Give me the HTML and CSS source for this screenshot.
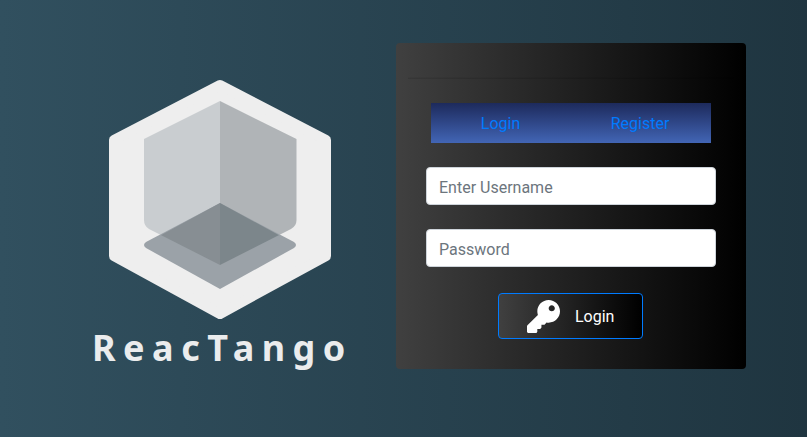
FILE: index.html
```html
<!DOCTYPE html>
<html lang="en">
<head>
<meta charset="utf-8">
<title>ReacTango</title>
<link rel="stylesheet" href="styles.css">
</head>
<body>
<main class="page">
  <section class="brand">
    <svg class="logo" width="224" height="240" viewBox="108 79 224 240" aria-hidden="true">
      <defs>
        <clipPath id="floor"><path d="M220 203 L297 245 L220 289 L143 245 Z"/></clipPath>
      </defs>
      <path class="hex" d="M220 85 L326 140 V256 L220 314 L114 256 V140 Z"/>
      <path class="wall-l" d="M220 101 V265 L149 229 Q144 226 144 220 V139 Z"/>
      <path class="wall-r" d="M220 101 V265 L291 229 Q296.500 226 296.500 220 V139 Z"/>
      <path class="ground" d="M220 203 L294 242 Q298 245 294 248 L220 289 L146 248 Q142 245 146 242 Z"/>
      <g clip-path="url(#floor)">
        <path class="over-l" d="M220 101 V265 L149 229 Q144 226 144 220 V139 Z"/>
        <path class="over-r" d="M220 101 V265 L291 229 Q296.500 226 296.500 220 V139 Z"/>
      </g>
    </svg>
    <div class="wordmark">ReacTango</div>
  </section>
  <section class="card">
    <hr class="rule">
    <nav class="tabs">
      <a class="tab" href="#">Login</a>
      <a class="tab" href="#">Register</a>
    </nav>
    <form class="form">
      <input class="field" type="text" placeholder="Enter Username">
      <input class="field" type="password" placeholder="Password">
      <button class="submit" type="button">
        <svg class="key" width="33" height="33" viewBox="0 0 512 512" aria-hidden="true"><path d="M512 176.001C512 273.203 433.202 352 336 352c-11.22 0-22.19-1.062-32.827-3.069l-24.012 27.014A23.999 23.999 0 0 1 261.223 384H224v40c0 13.255-10.745 24-24 24h-40v40c0 13.255-10.745 24-24 24H24c-13.255 0-24-10.745-24-24v-78.059c0-6.365 2.529-12.47 7.029-16.971l161.802-161.802C163.108 213.814 160 195.271 160 176 160 78.798 238.797.001 335.999 0 433.488-.001 512 78.511 512 176.001zM336 128c0 26.510 21.490 48 48 48s48-21.490 48-48-21.490-48-48-48-48 21.490-48 48z"/></svg>
        <span>Login</span>
      </button>
    </form>
  </section>
</main>
</body>
</html>
```
FILE: styles.css
```css
* { box-sizing: border-box; }
html, body { height: 100%; }
body {
  margin: 0;
  overflow: hidden;
  font-family: Roboto, sans-serif;
  background: linear-gradient(90deg, #31505f 0%, #1f3540 100%);
}
.page {
  display: flex;
  align-items: flex-start;
  height: 437px;
  padding-left: 44px;
}
.brand {
  width: 352px;
  padding-top: 79px;
  display: flex;
  flex-direction: column;
  align-items: flex-start;
}
.logo {
  display: block;
  margin-left: 64px;
}
.hex {
  fill: #eeeeee;
  stroke: #eeeeee;
  stroke-width: 10;
  stroke-linejoin: round;
}
.wall-l { fill: #c9cdd0; }
.wall-r { fill: #b0b4b7; }
.ground { fill: #9ba2a8; }
.over-l { fill: #878e93; }
.over-r { fill: #7c868b; }
.wordmark {
  width: 264px;
  margin: 5px 0 0 48px;
  font-family: "Noto Sans", sans-serif;
  font-weight: 700;
  font-size: 36px;
  line-height: 48px;
  letter-spacing: 7.5px;
  color: #ebeced;
  white-space: nowrap;
}
.card {
  width: 350px;
  height: 326px;
  margin-top: 43px;
  padding: 35px 30px 0;
  border-radius: 4px;
  background: linear-gradient(90deg, #404040 0%, #000000 100%);
}
.rule {
  height: 1px;
  margin: 0 -18px 24px;
  border: 0;
  background: rgba(0, 0, 0, 0.1);
  box-shadow: 0 -1px 0 rgba(0, 0, 0, 0.04);
}
.tabs {
  display: grid;
  grid-template-columns: 139px 141px;
  height: 40px;
  margin: 0 5px 24px;
  background: linear-gradient(180deg, #1d2a5c 0%, #4265b5 100%);
}
.tab {
  display: flex;
  align-items: center;
  justify-content: center;
  color: #007bff;
  font-size: 16px;
  text-decoration: none;
}
.tab:last-child { padding-right: 1px; }
.form {
  display: flex;
  flex-direction: column;
  align-items: center;
  gap: 24px;
}
.field {
  display: block;
  width: 290px;
  height: 38px;
  padding: 7px 12px 5px 12px;
  border: 1px solid #ced4da;
  border-radius: 4px;
  background: #ffffff;
  font-family: Roboto, sans-serif;
  font-size: 16px;
  color: #495057;
}
.field::placeholder { color: #6c757d; opacity: 1; }
.form .submit { margin: 2px 1px 0 0; }
.submit {
  display: flex;
  align-items: center;
  gap: 15px;
  width: 145px;
  height: 46px;
  padding: 0 0 0 28px;
  border: 1px solid #007bff;
  border-radius: 4px;
  background: linear-gradient(90deg, #404040 0%, #000000 100%);
  color: #ffffff;
  font-family: Roboto, sans-serif;
  font-size: 16px;
}
.key { display: block; fill: #ffffff; flex: none; }
```
